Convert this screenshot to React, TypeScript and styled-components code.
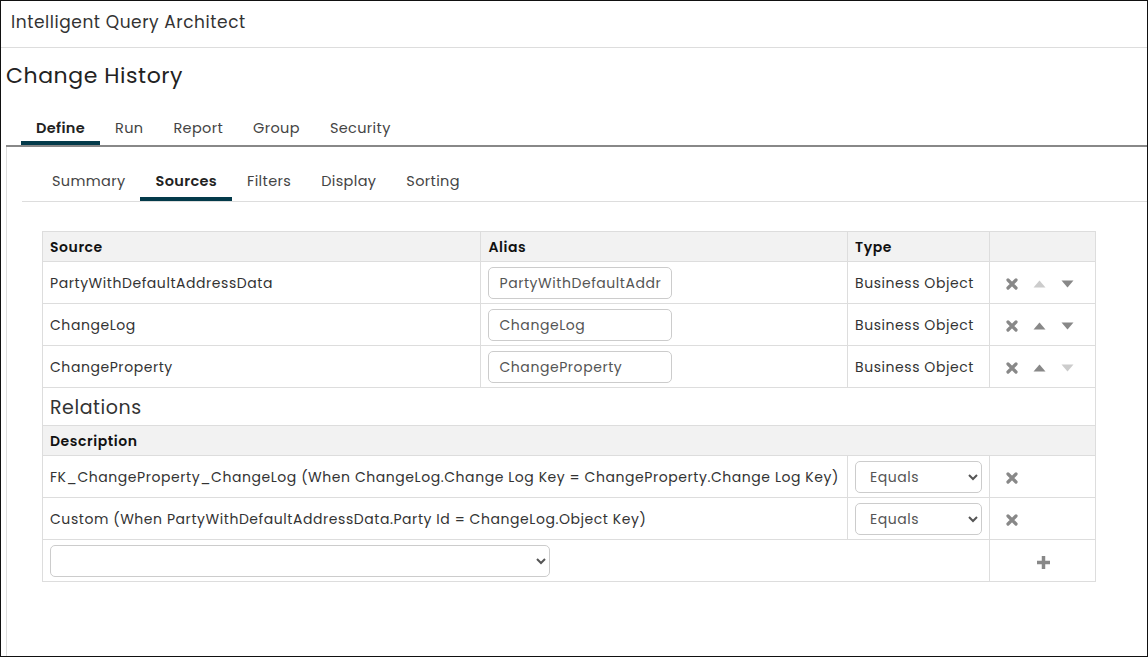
import React from "react";
import styled, { createGlobalStyle } from "styled-components";

const GlobalStyle = createGlobalStyle`
  html, body {
    margin: 0;
    padding: 0;
    background: #fff;
  }
  body {
    font-family: "Poppins", "Open Sans", "Liberation Sans", sans-serif;
    letter-spacing: 0.035em;
    color: #333;
  }
  * {
    box-sizing: border-box;
  }
`;

const Frame = styled.div`
  width: 1148px;
  height: 657px;
  border: 1px solid #111;
  display: flex;
  flex-direction: column;
  overflow: hidden;
`;

const AppBar = styled.header`
  height: 47px;
  flex: none;
  border-bottom: 1px solid #ddd;
  display: flex;
  align-items: center;
  padding-left: 10px;
  padding-bottom: 4px;
  font-size: 17px;
  color: #333;
`;

const Main = styled.main`
  flex: 1;
  display: flex;
  flex-direction: column;
  padding-left: 5px;
`;

const Title = styled.h1`
  margin: 0;
  padding-top: 11px;
  height: 56px;
  font-size: 22px;
  font-weight: 400;
  color: #222;
`;

const TabBar = styled.nav<{ $minor?: boolean }>`
  display: flex;
  padding-left: 15px;
  border-bottom: ${(p) => (p.$minor ? "1px solid #ddd" : "2px solid #888")};
`;

const Tab = styled.div<{ $active?: boolean; $minor?: boolean }>`
  padding: 0 15px;
  height: ${(p) => (p.$minor ? "31px" : "41px")};
  padding-top: ${(p) => (p.$minor ? "1px" : "14px")};
  font-size: 14.5px;
  letter-spacing: 0.024em;
  color: ${(p) => (p.$active ? "#222" : "#444")};
  font-weight: ${(p) => (p.$active ? 600 : 400)};
  border-bottom: 4px solid ${(p) => (p.$active ? "#033a4a" : "transparent")};
`;

const Panel = styled.section`
  flex: 1;
  border-left: 1px solid #ddd;
  padding-left: 15px;
`;

const SubNavWrap = styled.div`
  padding-top: 23px;
`;

const TableWrap = styled.div`
  padding: 29px 0 0 20px;
`;

const Grid = styled.table`
  width: 1054px;
  border-collapse: collapse;
  font-size: 14px;
  color: #333;
  td,
  th {
    border: 1px solid #ddd;
    padding: 1px 7px 0;
    text-align: left;
    vertical-align: middle;
  }
`;

const HeadCell = styled.th`
  height: 30px;
  background: #f2f2f2;
  font-weight: 600;
  color: #111;
`;

const Cell = styled.td`
  height: 42px;
`;

const SectionCell = styled.td`
  height: 38px;
  font-size: 19px;
  color: #333;
`;

const TextBox = styled.input`
  width: 184px;
  height: 32px;
  border: 1px solid #ccc;
  border-radius: 5px;
  padding: 0 10px;
  font: inherit;
  letter-spacing: inherit;
  font-size: 14px;
  color: #555;
  background: #fff;
`;

const Dropdown = styled.select<{ $w: number }>`
  width: ${(p) => p.$w}px;
  height: 32px;
  border: 1px solid #ccc;
  border-radius: 5px;
  padding: 0 10px;
  font: inherit;
  letter-spacing: inherit;
  font-size: 14px;
  color: #555;
  background: #fff;
`;

const Actions = styled.div<{ $center?: boolean }>`
  display: flex;
  align-items: center;
  justify-content: ${(p) => (p.$center ? "center" : "flex-start")};
  gap: 15px;
  padding-left: ${(p) => (p.$center ? "1px" : "8px")};
  padding-top: ${(p) => (p.$center ? "3px" : "1px")};
`;

const IconBtn = styled.span<{ $dim?: boolean }>`
  display: inline-flex;
  width: 13px;
  justify-content: center;
  color: ${(p) => (p.$dim ? "#ccc" : "#888")};
`;

const XIcon = () => (
  <svg width="12" height="12" viewBox="0 0 12 12">
    <path
      d="M2 2 L10 10 M10 2 L2 10"
      stroke="currentColor"
      strokeWidth="3.2"
      strokeLinecap="round"
    />
  </svg>
);

const UpIcon = () => (
  <svg width="13" height="8" viewBox="0 0 13 8">
    <path d="M6.5 0.5 L12.5 7.5 L0.5 7.5 Z" fill="currentColor" />
  </svg>
);

const DownIcon = () => (
  <svg width="13" height="8" viewBox="0 0 13 8">
    <path d="M0.5 0.5 L12.5 0.5 L6.5 7.5 Z" fill="currentColor" />
  </svg>
);

const PlusIcon = () => (
  <svg width="15" height="15" viewBox="0 0 15 15">
    <path d="M5.5 0 H9.5 V5.5 H15 V9.5 H9.5 V15 H5.5 V9.5 H0 V5.5 H5.5 Z" fill="currentColor" />
  </svg>
);

const sources = [
  { name: "PartyWithDefaultAddressData", alias: "PartyWithDefaultAddressData" },
  { name: "ChangeLog", alias: "ChangeLog" },
  { name: "ChangeProperty", alias: "ChangeProperty" },
];

const relations = [
  "FK_ChangeProperty_ChangeLog (When ChangeLog.Change Log Key = ChangeProperty.Change Log Key)",
  "Custom (When PartyWithDefaultAddressData.Party Id = ChangeLog.Object Key)",
];

export default function App() {
  return (
    <>
      <GlobalStyle />
      <Frame>
        <AppBar>Intelligent Query Architect</AppBar>
        <Main>
          <Title>Change History</Title>
          <TabBar>
            <Tab $active>Define</Tab>
            <Tab>Run</Tab>
            <Tab>Report</Tab>
            <Tab>Group</Tab>
            <Tab>Security</Tab>
          </TabBar>
          <Panel>
            <SubNavWrap>
              <TabBar $minor>
                <Tab $minor>Summary</Tab>
                <Tab $minor $active>
                  Sources
                </Tab>
                <Tab $minor>Filters</Tab>
                <Tab $minor>Display</Tab>
                <Tab $minor>Sorting</Tab>
              </TabBar>
            </SubNavWrap>
            <TableWrap>
              <Grid>
                <colgroup>
                  <col style={{ width: 439 }} />
                  <col style={{ width: 367 }} />
                  <col style={{ width: 142 }} />
                  <col style={{ width: 106 }} />
                </colgroup>
                <thead>
                  <tr>
                    <HeadCell>Source</HeadCell>
                    <HeadCell>Alias</HeadCell>
                    <HeadCell>Type</HeadCell>
                    <HeadCell />
                  </tr>
                </thead>
                <tbody>
                  {sources.map((s, i) => (
                    <tr key={s.name}>
                      <Cell>{s.name}</Cell>
                      <Cell>
                        <TextBox defaultValue={s.alias} />
                      </Cell>
                      <Cell>Business Object</Cell>
                      <Cell>
                        <Actions>
                          <IconBtn>
                            <XIcon />
                          </IconBtn>
                          <IconBtn $dim={i === 0}>
                            <UpIcon />
                          </IconBtn>
                          <IconBtn $dim={i === sources.length - 1}>
                            <DownIcon />
                          </IconBtn>
                        </Actions>
                      </Cell>
                    </tr>
                  ))}
                  <tr>
                    <SectionCell colSpan={4}>Relations</SectionCell>
                  </tr>
                  <tr>
                    <HeadCell colSpan={4}>Description</HeadCell>
                  </tr>
                  {relations.map((r) => (
                    <tr key={r}>
                      <Cell colSpan={2}>{r}</Cell>
                      <Cell>
                        <Dropdown $w={127} defaultValue="Equals">
                          <option>Equals</option>
                        </Dropdown>
                      </Cell>
                      <Cell>
                        <Actions>
                          <IconBtn>
                            <XIcon />
                          </IconBtn>
                        </Actions>
                      </Cell>
                    </tr>
                  ))}
                  <tr>
                    <Cell colSpan={3}>
                      <Dropdown $w={500}>
                        <option></option>
                      </Dropdown>
                    </Cell>
                    <Cell>
                      <Actions $center>
                        <IconBtn>
                          <PlusIcon />
                        </IconBtn>
                      </Actions>
                    </Cell>
                  </tr>
                </tbody>
              </Grid>
            </TableWrap>
          </Panel>
        </Main>
      </Frame>
    </>
  );
}
